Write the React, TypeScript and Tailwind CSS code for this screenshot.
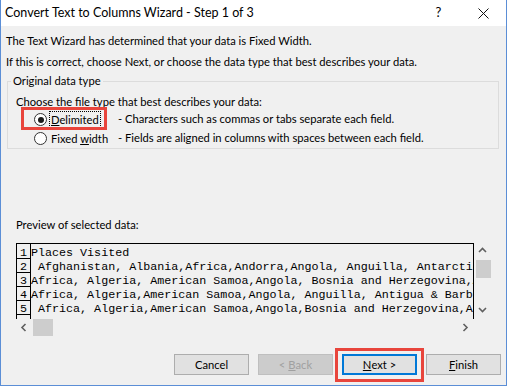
import React from "react";

function Radio({ checked }: { checked?: boolean }) {
  return (
    <div className="w-[13px] h-[13px] rounded-full border border-[#333333] bg-white flex items-center justify-center shrink-0">
      {checked && <div className="w-[6px] h-[6px] rounded-full bg-[#1a1a1a]" />}
    </div>
  );
}

function Chevron({ dir }: { dir: "up" | "down" | "left" | "right" }) {
  const pts: Record<string, string> = {
    up: "1,5 4.5,1.5 8,5",
    down: "1,2 4.5,5.5 8,2",
    left: "5.5,1 2,4.5 5.5,8",
    right: "2.5,1 6,4.5 2.5,8",
  };
  return (
    <svg width="9" height="9" viewBox="0 0 9 9">
      <polyline points={pts[dir]} fill="none" stroke="#606060" strokeWidth="1.6" />
    </svg>
  );
}

const rows = [
  "Places Visited",
  " Afghanistan, Albania,Africa,Andorra,Angola, Anguilla, Antarctica, Antigua",
  "Africa, Algeria, American Samoa,Angola, Bosnia and Herzegovina,Argentina",
  "Africa, Algeria,American Samoa,Angola, Anguilla, Antigua & Barbuda",
  " Africa, Algeria,American Samoa,Angola,Bosnia and Herzegovina,Antigua",
  "",
];

function Button({
  children,
  disabled,
  focused,
}: {
  children: React.ReactNode;
  disabled?: boolean;
  focused?: boolean;
}) {
  const base = "w-[75px] h-[21px] flex items-center justify-center leading-none";
  if (disabled)
    return <div className={`${base} bg-[#cccccc] border border-[#bfbfbf] text-[#a0a0a0]`}>{children}</div>;
  if (focused)
    return <div className={`${base} bg-[#e1e1e1] border-2 border-[#0078d7] text-black`}>{children}</div>;
  return <div className={`${base} bg-[#e1e1e1] border border-[#adadad] text-black`}>{children}</div>;
}

export default function App() {
  return (
    <div className="w-[507px] h-[386px] bg-[#f0f0f0] border-x border-b border-[#5b8ed6] flex flex-col text-[11.2px] text-black overflow-hidden font-['Lato',sans-serif]">
      {/* Title bar */}
      <div className="h-[26px] bg-white flex items-center shrink-0">
        <div className="pl-[4px] text-[12.5px] leading-none">Convert Text to Columns Wizard - Step 1 of 3</div>
        <div className="ml-auto flex h-full">
          <div className="w-[45px] h-full flex items-center justify-center text-[13px]">?</div>
          <div className="w-[45px] h-full flex items-center justify-center">
            <svg width="11" height="11" viewBox="0 0 11 11">
              <path d="M0.5 0.5 L10.5 10.5 M10.5 0.5 L0.5 10.5" stroke="#111" strokeWidth="1" />
            </svg>
          </div>
        </div>
      </div>

      <p className="mt-[7px] pl-[5px] leading-[16px]">The Text Wizard has determined that your data is Fixed Width.</p>
      <p className="mt-[5px] pl-[5px] leading-[16px]">If this is correct, choose Next, or choose the data type that best describes your data.</p>

      <fieldset className="mt-[3px] ml-[6px] w-[492px] border border-[#dcdcdc]">
        <legend className="ml-[3px] px-[2px] leading-[16px]">Original data type</legend>
        <div className="mt-[5px] pl-[8px] leading-[16px]">Choose the file type that best describes your data:</div>
        <div className="relative h-[19px] flex items-center pl-[26px]">
          <Radio checked />
          <div className="w-[71px] pl-[2px] flex">
            <span className="border border-dotted border-black leading-[15px] px-[1px]">
              <span className="underline">D</span>elimited
            </span>
          </div>
          <span>- Characters such as commas or tabs separate each field.</span>
          <div className="absolute left-[13px] top-[-3px] w-[86px] h-[23px] border-[3px] border-[#e8453c]" />
        </div>
        <div className="h-[19px] flex items-center pl-[26px]">
          <Radio />
          <div className="w-[71px] pl-[4px] flex">
            <span className="leading-[15px]">
              Fixed <span className="underline">w</span>idth
            </span>
          </div>
          <span>- Fields are aligned in columns with spaces between each field.</span>
        </div>
      </fieldset>

      <div className="mt-[68px] pl-[15px] leading-[16px]">Preview of selected data:</div>

      <div className="mt-[10px] ml-[15px] w-[475px] h-[93px] grid grid-cols-[458px_17px] grid-rows-[76px_17px]">
        <div className="border-t border-x border-black overflow-hidden">
          {rows.map((r, i) => (
            <div key={i} className={`flex ${i === 0 ? "h-[15px]" : "h-[14px]"}`}>
              <div
                className={`w-[14px] shrink-0 border-r border-b border-black flex items-start justify-center font-['Liberation_Mono',monospace] text-[11.7px] leading-[11px] ${
                  i === 0 ? "pt-[4px]" : "pt-[3px]"
                }`}
              >
                {i + 1}
              </div>
              <div
                className={`whitespace-pre font-['Liberation_Mono',monospace] text-[11.7px] leading-[11px] ${
                  i === 0 ? "pt-[4px]" : "pt-[3px]"
                }`}
              >
                {r}
              </div>
            </div>
          ))}
        </div>
        <div className="flex flex-col items-center">
          <div className="h-[17px] flex items-center justify-center">
            <Chevron dir="up" />
          </div>
          <div className="w-[15px] h-[18px] bg-[#cdcdcd] ml-[1px]" />
          <div className="flex-1" />
          <div className="h-[17px] flex items-center justify-center">
            <Chevron dir="down" />
          </div>
        </div>
        <div className="flex items-center">
          <div className="w-[17px] h-[17px] flex items-center justify-center">
            <Chevron dir="left" />
          </div>
          <div className="w-[20px] h-[17px] bg-[#cdcdcd]" />
          <div className="flex-1" />
          <div className="w-[17px] h-[17px] flex items-center justify-center">
            <Chevron dir="right" />
          </div>
        </div>
        <div />
      </div>

      <div className="mt-[18px] flex justify-end gap-[9px] pr-[5px]">
        <Button>Cancel</Button>
        <Button disabled>
          &lt; <span className="underline ml-[3px]">B</span>ack
        </Button>
        <div className="relative">
          <Button focused>
            <span className="underline">N</span>ext &gt;
          </Button>
          <div className="absolute left-[-7px] top-[-6px] w-[89px] h-[34px] border-[3px] border-[#e8453c]" />
        </div>
        <Button>
          <span className="underline">F</span>inish
        </Button>
      </div>
    </div>
  );
}
